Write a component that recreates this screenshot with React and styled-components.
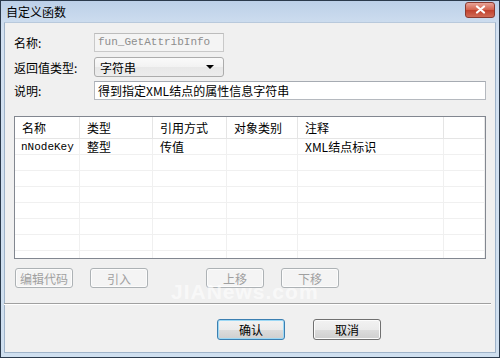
import React from 'react';
import styled, { createGlobalStyle } from 'styled-components';

const Global = createGlobalStyle`
	html, body { margin: 0; padding: 0; background: #fff; }
	body { font-family: "Noto Sans CJK SC", "Liberation Sans", sans-serif; font-size: 12px; color: #000; }
`;

const Window = styled.div`
	position: relative;
	width: 500px;
	height: 358px;
	box-sizing: border-box;
	border: 1px solid #2b3a4c;
	background: linear-gradient(#bcd0e8, #d3e1f1 30px, #cfdfef);
	display: flex;
	flex-direction: column;
	overflow: hidden;
`;

const TitleBar = styled.div`
	height: 21px;
	display: flex;
	align-items: center;
	justify-content: space-between;
	padding: 0 4px 0 5px;
	font-size: 12px;
	color: #000;
`;

const CloseBtn = styled.div`
	width: 28px;
	height: 14px;
	margin-top: -4px;
	border: 1px solid #8a3a30;
	border-radius: 3px;
	background: linear-gradient(#e8a397, #d2604b 50%, #c0402c 51%, #d06a55);
	display: flex;
	align-items: center;
	justify-content: center;
`;

const Body = styled.div`
	flex: 1;
	margin: 0 3px 4px 3px;
	background: #f0f0f0;
	border: 1px solid #9fb3c9;
	border-top-color: #b8c9dc;
	padding: 10px 9px 0 9px;
	display: flex;
	flex-direction: column;
`;

const FormRow = styled.div`
	display: grid;
	grid-template-columns: 80px 1fr;
	align-items: center;
	height: 19px;
	margin-bottom: ${p => p.gap || 4}px;
`;

const Label = styled.span`
	font-size: 12px;
`;

const TextBox = styled.div`
	box-sizing: border-box;
	height: 19px;
	width: ${p => p.width || 'auto'};
	border: 1px solid ${p => (p.disabled ? '#c9c9c9' : '#b5b9bf')};
	border-top-color: ${p => (p.disabled ? '#bcbcbc' : '#a6abb2')};
	background: ${p => (p.disabled ? '#f4f4f4' : '#fff')};
	color: ${p => (p.disabled ? '#8d8d8d' : '#000')};
	font-family: ${p => (p.mono ? '"Liberation Mono", monospace' : 'inherit')};
	font-size: ${p => (p.mono ? 11 : 12)}px;
	line-height: 17px;
	padding: 0 3px;
	white-space: nowrap;
	overflow: hidden;
`;

const Select = styled.div`
	box-sizing: border-box;
	height: 20px;
	width: 130px;
	border: 1px solid #acacac;
	border-radius: 3px;
	background: linear-gradient(#fafafa, #f2f2f2 50%, #e8e8e8 51%, #ececec);
	display: flex;
	align-items: center;
	justify-content: space-between;
	padding: 0 9px 0 5px;
	font-size: 12px;
`;

const Arrow = styled.span`
	width: 0;
	height: 0;
	border-left: 4px solid transparent;
	border-right: 4px solid transparent;
	border-top: 4px solid #000;
`;

const Table = styled.div`
	margin-top: 12px;
	height: 143px;
	box-sizing: border-box;
	border: 1px solid #828790;
	background: #fff;
	display: grid;
	grid-template-columns: 65px 73px 74px 71px 146px 1fr;
	grid-auto-rows: 16px;
	grid-template-rows: 22px;
	overflow: hidden;
`;

const HeadCell = styled.div`
	border-right: 1px solid #e5e5e5;
	border-bottom: 1px solid #e5e5e5;
	padding-left: 7px;
	display: flex;
	align-items: center;
	font-size: 12px;
	background: #fff;
`;

const Cell = styled.div`
	border-right: 1px solid #f0f0f0;
	border-bottom: 1px solid #f0f0f0;
	padding-left: ${p => (p.first ? 6 : 7)}px;
	display: flex;
	align-items: center;
	font-size: ${p => (p.mono ? 11 : 12)}px;
	font-family: ${p => (p.mono ? '"Liberation Mono", monospace' : 'inherit')};
	white-space: nowrap;
`;

const ButtonRow = styled.div`
	display: flex;
	margin-top: 9px;
	padding-left: 1px;
`;

const Button = styled.div`
	box-sizing: border-box;
	width: ${p => p.width || 58}px;
	height: ${p => p.height || 20}px;
	margin-left: ${p => p.offset || 0}px;
	border: 1px solid ${p => (p.disabled ? '#adb2b5' : p.primary ? '#3c7fb1' : '#707070')};
	border-radius: 3px;
	background: ${p => (p.disabled ? '#f4f4f4' : 'linear-gradient(#f2f2f2, #ebebeb 50%, #dddddd 51%, #cfcfcf)')};
	box-shadow: ${p => (p.primary ? 'inset 0 0 0 1px #9cd8f5' : 'inset 0 0 0 1px #fcfcfc')};
	color: ${p => (p.disabled ? '#a0a0a0' : '#000')};
	display: flex;
	align-items: center;
	justify-content: center;
	font-size: 12px;
`;

const Separator = styled.div`
	margin: 15px -5px 0 -10px;
	height: 0;
	border-top: 1px solid #a0a0a0;
	border-bottom: 1px solid #ffffff;
`;

const FooterRow = styled.div`
	display: flex;
	gap: 28px;
	margin-top: 14px;
	padding-left: 203px;
`;

const Watermark = styled.div`
	position: absolute;
	left: 170px;
	top: 279px;
	font-family: "Liberation Sans", sans-serif;
	font-weight: bold;
	font-size: 21px;
	letter-spacing: 1px;
	color: rgba(255, 255, 255, 0.6);
	pointer-events: none;
`;

const columns = ['名称', '类型', '引用方式', '对象类别', '注释', ''];
const rows = [['nNodeKey', '整型', '传值', '', 'XML结点标识', '']];
const emptyRows = 7;

export default function App() {
	const blank = Array.from({ length: emptyRows }, () => ['', '', '', '', '', '']);
	return (
		<>
			<Global />
			<Window>
				<TitleBar>
					<span>自定义函数</span>
					<CloseBtn>
						<svg width="11" height="9" viewBox="0 0 11 9">
							<path d="M2 1.5 L9 7.5 M9 1.5 L2 7.5" stroke="#fff" strokeWidth="2.2" strokeLinecap="round" />
						</svg>
					</CloseBtn>
				</TitleBar>
				<Body>
					<FormRow gap={5}>
						<Label>名称:</Label>
						<TextBox disabled mono width="130px">fun_GetAttribInfo</TextBox>
					</FormRow>
					<FormRow gap={5}>
						<Label>返回值类型:</Label>
						<Select>
							<span>字符串</span>
							<Arrow />
						</Select>
					</FormRow>
					<FormRow>
						<Label>说明:</Label>
						<TextBox>得到指定XML结点的属性信息字符串</TextBox>
					</FormRow>
					<Table>
						{columns.map((c, i) => (
							<HeadCell key={i}>{c}</HeadCell>
						))}
						{[...rows, ...blank].map((r, ri) =>
							r.map((v, ci) => (
								<Cell key={`${ri}-${ci}`} first={ci === 0} mono={ri === 0 && ci === 0}>{v}</Cell>
							))
						)}
					</Table>
					<ButtonRow>
						<Button disabled>编辑代码</Button>
						<Button disabled offset={17}>引入</Button>
						<Button disabled offset={58}>上移</Button>
						<Button disabled offset={17}>下移</Button>
					</ButtonRow>
					<Separator />
					<FooterRow>
						<Button primary width={68} height={21}>确认</Button>
						<Button width={68} height={21}>取消</Button>
					</FooterRow>
				</Body>
				<Watermark>JIANews.com</Watermark>
			</Window>
		</>
	);
}
